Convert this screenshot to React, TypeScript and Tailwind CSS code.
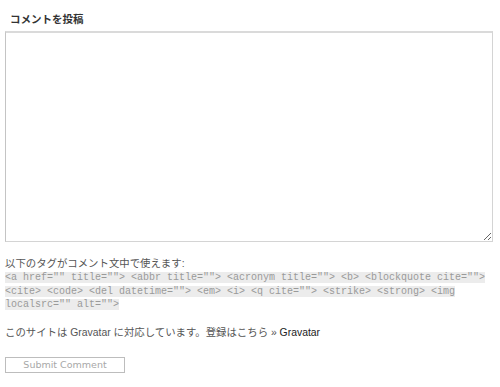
export default function App() {
  const tags =
    '<a href="" title=""> <abbr title=""> <acronym title=""> <b> <blockquote cite=""> <cite> <code> <del datetime=""> <em> <i> <q cite=""> <strike> <strong> <img localsrc="" alt="">';

  return (
    <div
      className="w-[500px] h-[387px] bg-white overflow-hidden pl-[5px] pr-[7px]"
      style={{ fontFamily: '"Liberation Sans", "Noto Sans CJK JP", sans-serif' }}
    >
      <h3 className="pt-[12px] pl-[5px] text-[10.5px] leading-[14px] font-bold text-[#333]">
        コメントを投稿
      </h3>

      <textarea
        className="block mt-[5px] w-[488px] h-[211px] bg-white border border-[#d4d4d4] border-t-[2px] border-t-[#dadada] border-l-[#c4c4c4] outline-none"
        defaultValue=""
      />

      <p className="mt-[15px] text-[10.4px] leading-[13px] text-[#555]">
        以下のタグがコメント文中で使えます:
      </p>
      <p className="mt-[1px] text-[10px] leading-[12.6px]">
        <code
          className="bg-[#ececec] text-[#9a9a9a] text-[10px] leading-[12.6px] box-decoration-clone"
          style={{ fontFamily: '"Liberation Mono", monospace' }}
        >
          {tags}
        </code>
      </p>

      <p className="mt-[14px] text-[10.4px] leading-[13px] text-[#555]">
        このサイトは Gravatar に対応しています。登録はこちら »{" "}
        <a className="text-[#222]">Gravatar</a>
      </p>

      <button
        className="mt-[18px] w-[120px] h-[16px] border border-[#bdbdbd] bg-white text-[9.5px] leading-[14px] text-[#a8a8a8]"
        style={{ fontFamily: '"DejaVu Sans", sans-serif' }}
      >
        Submit Comment
      </button>
    </div>
  );
}
